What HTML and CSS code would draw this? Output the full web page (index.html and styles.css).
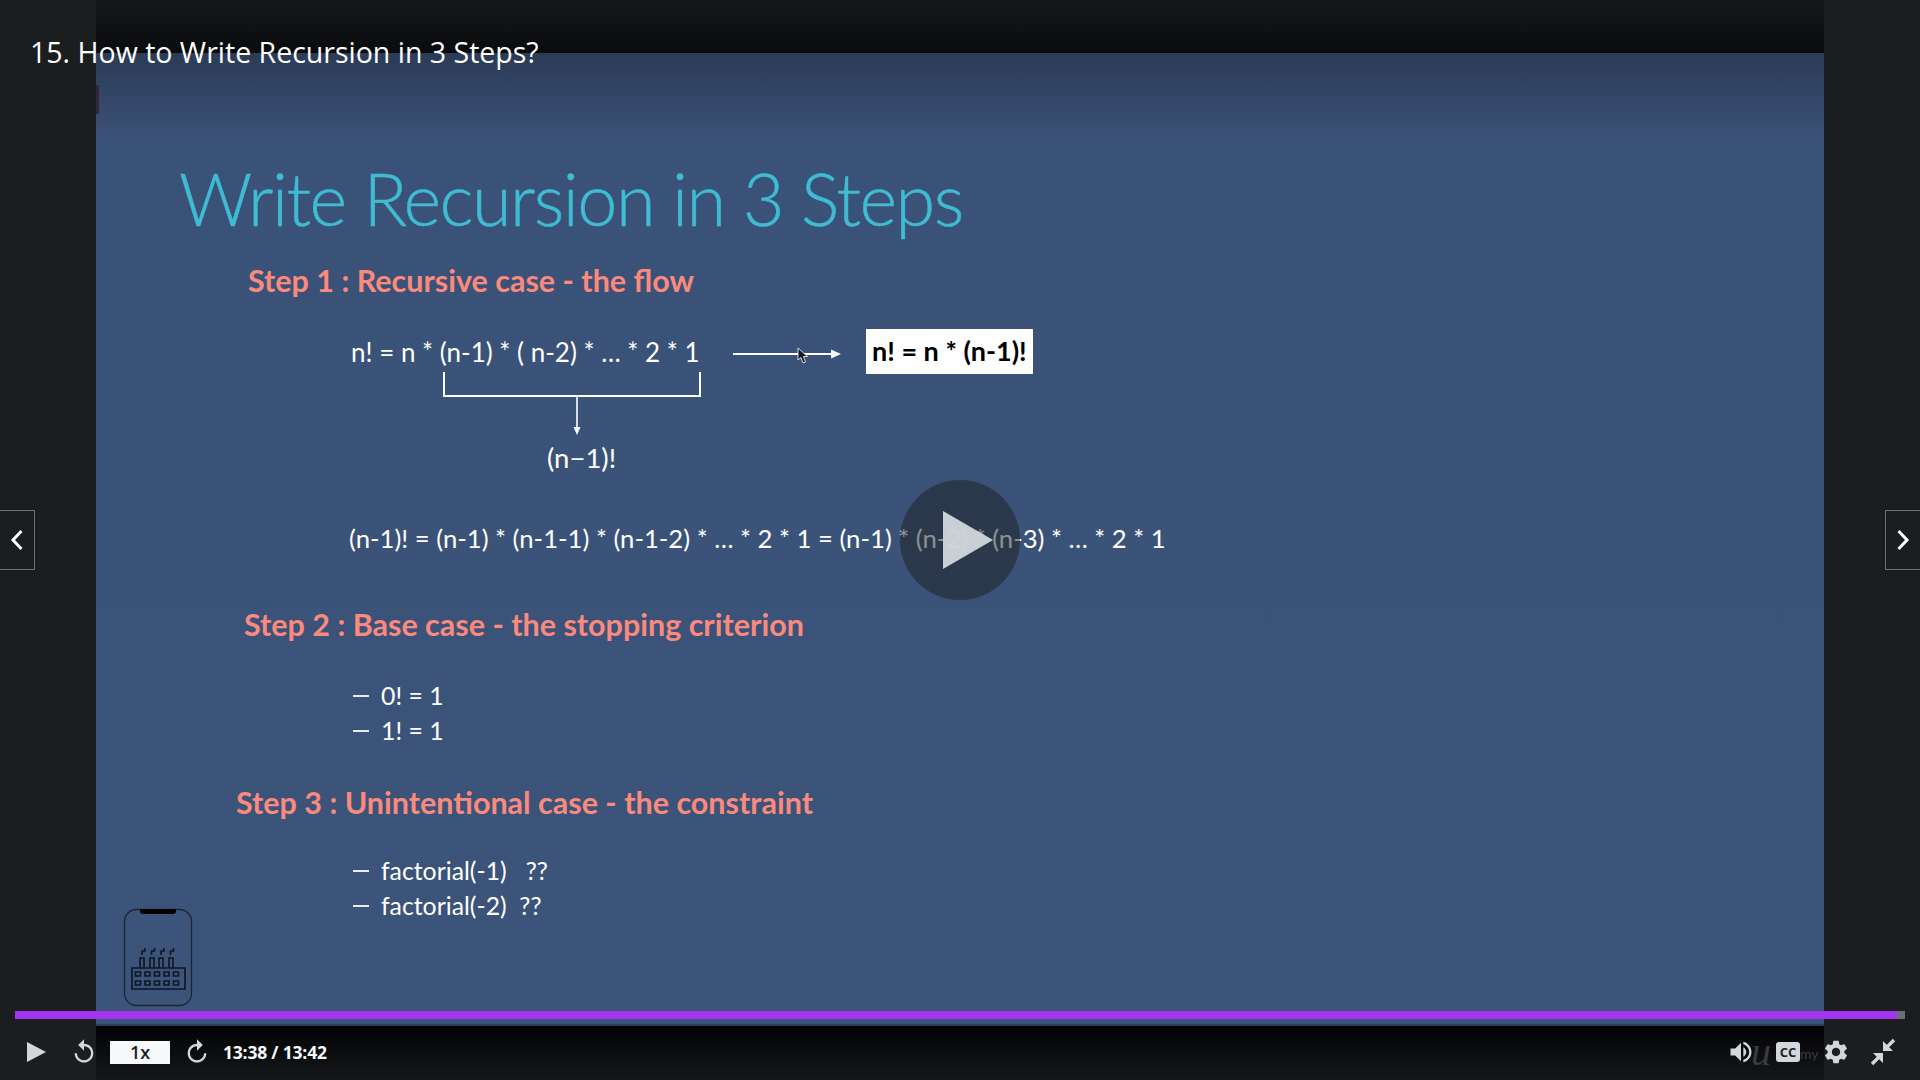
FILE: index.html
```html
<!DOCTYPE html>
<html lang="en">
<head>
    <meta charset="UTF-8">
    <meta name="viewport" content="width=device-width, initial-scale=1.0">
    <title>15. How to Write Recursion in 3 Steps?</title>
    <link rel="stylesheet" href="styles.css">
</head>
<body>
    <div class="player">
        <div class="video">
            <div class="bar-top"></div>
            <div class="slide">
                <h1 class="slide-title">Write Recursion in 3 Steps</h1>
                <h2 class="step step-one">Step 1 : Recursive case - the flow</h2>
                <div class="flow">
                    <span class="formula">n! = n * (n-1) * ( n-2) * … * 2 * 1</span>
                    <svg class="flow-arrow" width="108" height="12" viewBox="0 0 108 12">
                        <path d="M0 6H100" stroke="#fff" stroke-width="2"/>
                        <path d="M98 1.500L108 6L98 10.500Z" fill="#fff"/>
                    </svg>
                    <span class="result">n! = n * (n-1)!</span>
                </div>
                <svg class="bracket" width="260" height="63" viewBox="0 0 260 63">
                    <path d="M1 0V24H257V0" fill="none" stroke="#fff" stroke-width="2"/>
                    <path d="M134 24V57" stroke="#fff" stroke-width="1.600"/>
                    <path d="M130.500 55L137.500 55L134 63Z" fill="#fff"/>
                </svg>
                <p class="sub-result">(n−1)!</p>
                <p class="expansion">(n-1)! = (n-1) * (n-1-1) * (n-1-2) * … * 2 * 1 = (n-1) * (n-2) * (n-3) * … * 2 * 1</p>
                <h2 class="step step-two">Step 2 : Base case - the stopping criterion</h2>
                <ul class="cases cases-base">
                    <li>0! = 1</li>
                    <li>1! = 1</li>
                </ul>
                <h2 class="step step-three">Step 3 : Unintentional case - the constraint</h2>
                <ul class="cases cases-wrong">
                    <li>factorial(-1) &nbsp; ??</li>
                    <li>factorial(-2) &nbsp;??</li>
                </ul>
            </div>
            <div class="bar-bottom"></div>

            <!-- slide logo, cursor and the mark by the edge sit on the video -->
            <span class="edge-mark"></span>
            <svg class="phone" width="70" height="100" viewBox="0 0 70 100">
                <rect x="1.500" y="1.500" width="67" height="96" rx="12" fill="none" stroke="#1b2435" stroke-width="1.300"/>
                <path d="M17 1H53V3Q53 6 50 6H20Q17 6 17 3Z" fill="#000"/>
                <g fill="none" stroke="#0f1522" stroke-width="1.600">
                    <path d="M9 60H62V81H9Z"/>
                    <path d="M17 60V50H21V60M27 60V50H31V60M36 60V50H40V60M46 60V50H50V60"/>
                    <path d="M19 47V43H22V40M28.500 47V43H31.500V40M38 47V43H41V40M47.500 47V43H50.500V40"/>
                    <path d="M12.500 64h5v4h-5zM22 64h5v4h-5zM31.500 64h5v4h-5zM41 64h5v4h-5zM50.500 64h5v4h-5z"/>
                    <path d="M12.500 73h5v4h-5zM22 73h5v4h-5zM31.500 73h5v4h-5zM41 73h5v4h-5zM50.500 73h5v4h-5z"/>
                </g>
            </svg>
            <svg class="cursor" width="12" height="17" viewBox="0 0 12 17">
                <path d="M1 1V13L4 10.500L6 16L8.500 15L6.500 9.500H10.500Z" fill="#151a22" stroke="#fff" stroke-width="0.800"/>
            </svg>
        </div>

        <h3 class="lecture-title">15. How to Write Recursion in 3 Steps?</h3>

        <button class="nav nav-prev">
            <svg width="14" height="22" viewBox="0 0 14 22"><path d="M11.500 2L3 11L11.500 20" fill="none" stroke="#fff" stroke-width="3"/></svg>
        </button>
        <button class="nav nav-next">
            <svg width="14" height="22" viewBox="0 0 14 22"><path d="M2.500 2L11 11L2.500 20" fill="none" stroke="#fff" stroke-width="3"/></svg>
        </button>

        <div class="big-play">
            <svg width="50" height="58" viewBox="0 0 50 58"><path d="M0 0L50 29L0 58Z" fill="#d1d7dc" fill-opacity="0.95"/></svg>
        </div>

        <div class="progress"><div class="progress-fill"></div></div>

        <div class="controls">
            <div class="controls-left">
                <svg class="ctl-play" width="20" height="20" viewBox="0 0 20 20"><path d="M0 0L19 10L0 20Z" fill="#d1d7dc"/></svg>
                <svg class="ctl-back" width="28" height="28" viewBox="0 0 24 24"><path d="M12 5V1L7 6l5 5V7c3.310 0 6 2.690 6 6s-2.690 6-6 6-6-2.690-6-6H4c0 4.420 3.580 8 8 8s8-3.580 8-8-3.580-8-8-8z" fill="#d1d7dc"/></svg>
                <span class="speed">1x</span>
                <svg class="ctl-forward" width="28" height="28" viewBox="0 0 24 24"><path d="M12 5V1l5 5-5 5V7c-3.310 0-6 2.690-6 6s2.690 6 6 6 6-2.690 6-6h2c0 4.420-3.580 8-8 8s-8-3.580-8-8 3.580-8 8-8z" fill="#d1d7dc"/></svg>
                <span class="time">13:38 / 13:42</span>
            </div>
            <div class="controls-right">
                <svg class="ctl-volume" width="28" height="28" viewBox="0 0 24 24"><path d="M3 9v6h4l5 5V4L7 9H3zm13.500 3c0-1.770-1.020-3.290-2.500-4.030v8.050c1.480-.73 2.500-2.250 2.500-4.020zM14 3.230v2.060c2.890.86 5 3.540 5 6.710s-2.110 5.850-5 6.710v2.060c4.010-.91 7-4.490 7-8.770s-2.990-7.860-7-8.770z" fill="#d1d7dc"/></svg>
                <span class="watermark-u">u</span>
                <span class="cc">CC</span>
                <span class="watermark-my">my</span>
                <svg class="ctl-gear" width="28" height="28" viewBox="0 0 24 24"><path d="M19.140 12.940c.04-.3.060-.61.060-.94 0-.32-.02-.64-.07-.94l2.030-1.580c.18-.14.230-.41.120-.61l-1.920-3.320c-.12-.22-.37-.29-.59-.22l-2.390.96c-.5-.38-1.030-.7-1.620-.94l-.36-2.540c-.04-.24-.24-.41-.48-.41h-3.840c-.24 0-.43.170-.47.41l-.36 2.540c-.59.240-1.130.570-1.620.94l-2.390-.96c-.22-.08-.47 0-.59.220L2.740 8.870c-.12.210-.08.470.12.610l2.030 1.580c-.05.300-.09.630-.09.940s.02.640.07.94l-2.030 1.580c-.18.140-.23.410-.12.610l1.920 3.320c.12.220.37.290.59.220l2.390-.96c.5.380 1.030.7 1.620.94l.36 2.540c.05.240.24.410.48.410h3.840c.24 0 .44-.17.47-.41l.36-2.540c.59-.24 1.130-.56 1.620-.94l2.390.96c.22.080.47 0 .59-.22l1.920-3.320c.12-.22.070-.47-.12-.61l-2.010-1.580zM12 15.600c-1.980 0-3.600-1.620-3.600-3.600s1.620-3.600 3.600-3.600 3.600 1.620 3.600 3.600-1.620 3.600-3.600 3.600z" fill="#d1d7dc"/></svg>
                <svg class="ctl-shrink" width="26" height="28" viewBox="0 0 26 28">
                    <path d="M2 26L10 18M16 10L24 2" stroke="#d1d7dc" stroke-width="3.400" fill="none"/>
                    <path d="M3 15H13V25Z M13 3V13H23Z" fill="#d1d7dc"/>
                </svg>
            </div>
        </div>
    </div>
</body>
</html>
```

FILE: styles.css
```css
* {
    box-sizing: border-box;
}
body {
    margin: 0;
    background-color: #1c1d1f;
    font-family: "Lato", "Liberation Sans", sans-serif;
    color: #fff;
}
.player {
    position: relative;
    width: 1920px;
    height: 1080px;
    overflow: hidden;
}

/* video area */
.video {
    position: relative;
    width: 1728px;
    height: 1080px;
    margin: 0 96px;
    display: flex;
    flex-direction: column;
}
.bar-top {
    height: 53px;
    background: linear-gradient(#15171b, #0a0b0d);
}
.bar-bottom {
    height: 54px;
    background: linear-gradient(#030304, #15171a);
}
.slide {
    flex: 1;
    background: linear-gradient(#2b3b57 0, #3b5278 90px, #3c5479 100%);
    padding-top: 105px;
    display: flex;
    flex-direction: column;
    border-bottom: 2px solid #2c3e5c;
}
.slide-title {
    margin: 0 0 0 83px;
    font-size: 72px;
    font-weight: 300;
    line-height: 80px;
    letter-spacing: -1.5px;
    -webkit-text-stroke: 0.5px #3fbcd2;
    color: #3fbcd2;
}
.step {
    margin: 0;
    font-size: 30.500px;
    font-weight: 700;
    line-height: 34px;
    color: #fa8a7d;
}
.step-one {
    margin: 25px 0 0 152px;
}
.step-two {
    margin: 54px 0 0 148px;
}
.step-three {
    margin: 37px 0 0 140px;
}

.flow {
    display: flex;
    align-items: center;
    height: 45px;
    margin: 32px 0 0 255px;
    font-size: 26px;
}
.formula {
    width: 382px;
}
.flow-arrow {
    margin-top: 4px;
}
.result {
    margin-left: 25px;
    padding: 0 6px;
    height: 45px;
    line-height: 43px;
    background: #fff;
    color: #000;
    font-size: 27px;
    font-weight: 700;
}
.bracket {
    display: block;
    margin: -2px 0 0 347px;
}
.sub-result {
    margin: 8px 0 0 451px;
    font-size: 27.500px;
    line-height: 30px;
}
.expansion {
    margin: 50px 0 0 253px;
    font-size: 25.700px;
    line-height: 30px;
}
.cases {
    margin: 38px 0 0 257px;
    padding: 0;
    list-style: none;
    font-size: 24.800px;
    line-height: 34.500px;
}
.cases-wrong {
    margin-top: 35px;
}
.cases li {
    display: flex;
    align-items: center;
    gap: 12px;
}
.cases li::before {
    content: "";
    width: 16px;
    height: 2px;
    background: #e8ebf0;
}

/* things on top of the slide */
.edge-mark {
    position: absolute;
    left: 0;
    top: 85px;
    width: 3px;
    height: 29px;
    background: #33263a;
}
.phone {
    position: absolute;
    left: 27px;
    top: 908px;
}
.cursor {
    position: absolute;
    left: 701px;
    top: 347px;
}
.lecture-title {
    position: absolute;
    left: 30px;
    top: 32px;
    margin: 0;
    font-family: "Open Sans", sans-serif;
    font-size: 28.500px;
    font-weight: 400;
    line-height: 40px;
}
.nav {
    position: absolute;
    top: 510px;
    width: 35px;
    height: 60px;
    padding: 0;
    display: flex;
    align-items: center;
    justify-content: center;
    background: #1c1d1f;
    border: 1px solid #6a6f73;
}
.nav-prev {
    left: 0;
    border-left: none;
}
.nav-next {
    right: 0;
    border-right: none;
}
.big-play {
    position: absolute;
    left: 900px;
    top: 480px;
    width: 120px;
    height: 120px;
    padding-left: 43px;
    display: flex;
    align-items: center;
    border-radius: 50%;
    background: rgba(28, 29, 31, 0.5);
}

/* progress and controls */
.progress {
    position: absolute;
    left: 15px;
    top: 1011px;
    width: 1890px;
    height: 8px;
    background: #6a6f73;
}
.progress-fill {
    width: 1882px;
    height: 100%;
    background: #a435f0;
}
.controls {
    position: absolute;
    left: 0;
    right: 0;
    top: 1028px;
    height: 48px;
    display: flex;
    align-items: center;
    justify-content: space-between;
}
.controls-left,
.controls-right {
    display: flex;
    align-items: center;
}
.ctl-play {
    margin-left: 27px;
}
.ctl-back {
    margin-left: 23px;
}
.speed {
    width: 60px;
    height: 23px;
    margin-left: 12px;
    background: #f7f9fa;
    color: #1c1d1f;
    font-family: "Open Sans", sans-serif;
    font-size: 18px;
    font-weight: 600;
    line-height: 23px;
    text-align: center;
}
.ctl-forward {
    margin-left: 13px;
}
.time {
    margin-left: 12px;
    font-family: "Open Sans", sans-serif;
    font-size: 17.500px;
    font-weight: 700;
    letter-spacing: -0.2px;
    color: #f7f9fa;
}
.controls-right {
    padding-right: 24px;
}
.watermark-u {
    width: 20px;
    margin-left: -4px;
    font-family: "Liberation Serif", serif;
    font-size: 40px;
    font-style: italic;
    line-height: 24px;
    color: #3a3b3d;
}
.cc {
    width: 24px;
    height: 20px;
    margin-left: 5px;
    border-radius: 3px;
    background: #d1d7dc;
    color: #1c1d1f;
    font-family: "Open Sans", sans-serif;
    font-size: 13px;
    font-weight: 700;
    line-height: 20px;
    text-align: center;
}
.watermark-my {
    width: 16px;
    font-size: 14px;
    line-height: 20px;
    margin-top: 4px;
    color: #3a3b3d;
}
.ctl-gear {
    margin-left: 6px;
}
.ctl-shrink {
    margin-left: 20px;
}
```
